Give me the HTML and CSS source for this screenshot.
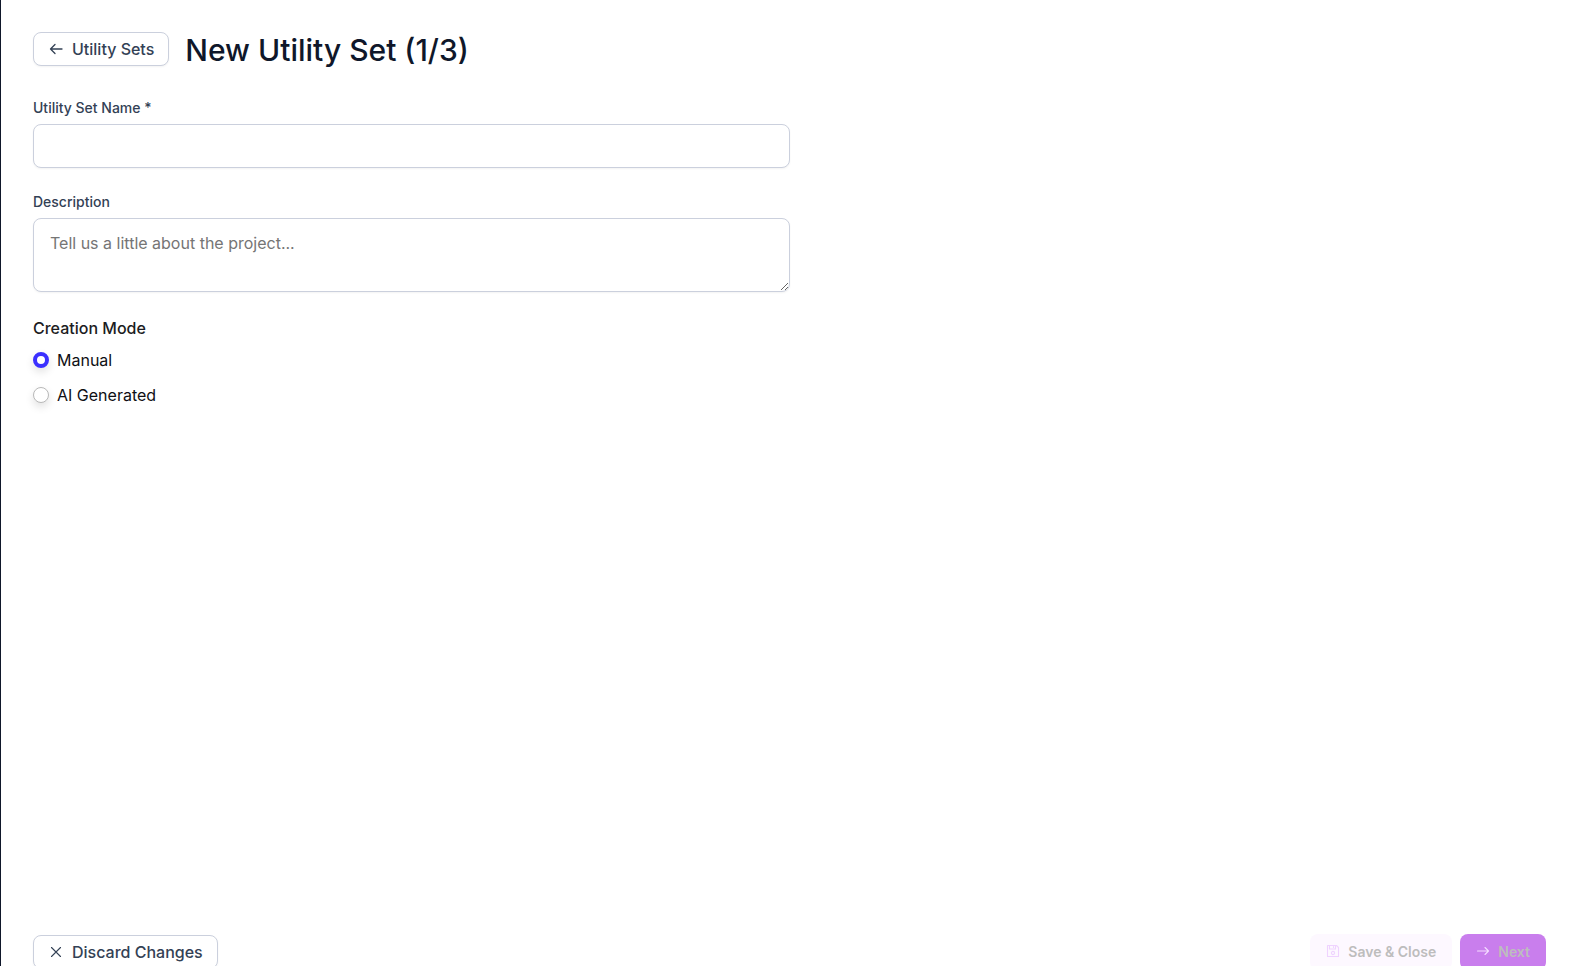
FILE: index.html
```html
<!DOCTYPE html>
<html lang="en">
<head>
<meta charset="utf-8">
<meta name="viewport" content="width=device-width, initial-scale=1">
<title>New Utility Set</title>
<link rel="stylesheet" href="styles.css">
</head>
<body>
<main class="page">
  <header class="page-header">
    <button type="button" class="btn btn-outline">
      <svg class="icon" viewBox="0 0 16 14" aria-hidden="true"><path d="M14 7H2.500M7 2.500 2.500 7 7 11.500"/></svg>
      Utility Sets
    </button>
    <h1 class="title">New Utility Set (1/3)</h1>
  </header>
  <form class="form" id="utility-form">
    <div class="field">
      <label class="label" for="name">Utility Set Name *</label>
      <input class="control" id="name" type="text">
    </div>
    <div class="field">
      <label class="label" for="description">Description</label>
      <textarea class="control control-area" id="description" rows="2" placeholder="Tell us a little about the project..."></textarea>
    </div>
    <fieldset class="modes">
      <legend class="legend">Creation Mode</legend>
      <label class="mode"><input class="radio" type="radio" name="mode" checked>Manual</label>
      <label class="mode"><input class="radio" type="radio" name="mode">AI Generated</label>
    </fieldset>
  </form>
  <footer class="actions">
    <button type="button" class="btn btn-outline">
      <svg class="icon icon-thin" viewBox="0 0 16 14" aria-hidden="true"><path d="m3.500 2.500 9 9M12.500 2.500l-9 9"/></svg>
      Discard Changes
    </button>
    <div class="action-group">
      <button type="button" class="btn btn-solid btn-save" disabled>
        <svg class="icon icon-small" viewBox="0 0 14 14" aria-hidden="true"><path d="M1.500 1.500h9l2 2v9h-11zM3.500 1.500v3.500h6V1.500M7.500 2.500v1"/><circle cx="7" cy="9" r="1.600"/></svg>
        Save &amp; Close
      </button>
      <button type="submit" form="utility-form" class="btn btn-solid btn-next" disabled>
        <svg class="icon icon-small" viewBox="0 0 14 14" aria-hidden="true"><path d="M1.500 7h11M9 3.500 12.500 7 9 10.500"/></svg>
        Next
      </button>
    </div>
  </footer>
</main>
</body>
</html>
```
FILE: styles.css
```css
* {
  box-sizing: border-box;
}

body {
  margin: 0;
  height: 100vh;
  overflow: hidden;
  background: #fff;
  color: #0f0f14;
  font: 400 16px/24px Inter, "Liberation Sans", sans-serif;
}

.page {
  display: flex;
  flex-direction: column;
  min-height: calc(100vh + 36px);
  padding: 32px;
  padding-right: 31px;
  border-left: 1px solid #0f172a;
}

.page-header {
  display: flex;
  align-items: flex-start;
  gap: 16px;
  margin-bottom: 30px;
}

.title {
  margin: 0;
  color: #0f172a;
  font-size: 30px;
  font-weight: 500;
  line-height: 36px;
}

.btn {
  display: inline-flex;
  align-items: center;
  gap: 8px;
  height: 34px;
  border-radius: 8px;
  font-family: inherit;
  white-space: nowrap;
}

.btn-outline {
  padding: 0 14px;
  border: 1px solid #cbd0dd;
  background: #fff;
  box-shadow: 0 1px 2px rgb(0 0 0 / 5%);
  color: #334155;
  font-size: 16px;
  font-weight: 500;
}

.icon {
  width: 16px;
  height: 14px;
  fill: none;
  stroke: currentColor;
  stroke-width: 1.3;
  stroke-linecap: round;
  stroke-linejoin: round;
}

.icon-thin {
  stroke-width: 1.1;
}

.icon-small {
  width: 14px;
  stroke-width: 1.1;
}

.form {
  display: flex;
  flex-direction: column;
  flex: 1;
  gap: 24px;
  width: 50%;
}

.field {
  display: flex;
  flex-direction: column;
  gap: 6px;
}

.label {
  color: #334155;
  font-size: 14px;
  font-weight: 500;
  line-height: 20px;
}

.control {
  width: 100%;
  height: 44px;
  padding: 8px 16px;
  border: 1px solid #cbd0dd;
  border-radius: 8px;
  background: #fff;
  box-shadow: 0 1px 2px rgb(0 0 0 / 5%);
  color: #0f172a;
  font: inherit;
}

.control-area {
  height: 74px;
  padding: 12px 16px;
  resize: vertical;
}

.control::placeholder {
  color: #757575;
}

.modes {
  display: flex;
  flex-direction: column;
  gap: 11px;
  margin: 0;
  padding: 0;
  border: 0;
}

.legend {
  margin-bottom: 8px;
  padding: 0;
  color: #1c1c22;
  font-weight: 500;
}

.mode {
  display: flex;
  align-items: center;
  gap: 8px;
}

.radio {
  width: 16px;
  height: 16px;
  margin: 0;
  appearance: none;
  border: 1px solid #b8b8b8;
  border-radius: 50%;
  background: #fff;
  box-shadow: 0 4px 8px rgb(0 0 0 / 12%);
}

.radio:checked {
  border: 4px solid #3b30ff;
}

.actions,
.action-group {
  display: flex;
  align-items: center;
}

.actions {
  justify-content: space-between;
}

.action-group {
  gap: 8px;
}

.btn-solid {
  height: 36px;
  padding: 0 16px 2px;
  border: 0;
  color: #bdbdbd;
  font-size: 14px;
  font-weight: 600;
}

.btn-save {
  background: #fdf8ff;
}

.btn-save .icon {
  stroke: #efd3ff;
}

.btn-next {
  background: #c97eed;
}

.btn-next .icon {
  stroke: #f5dcff;
}
```
